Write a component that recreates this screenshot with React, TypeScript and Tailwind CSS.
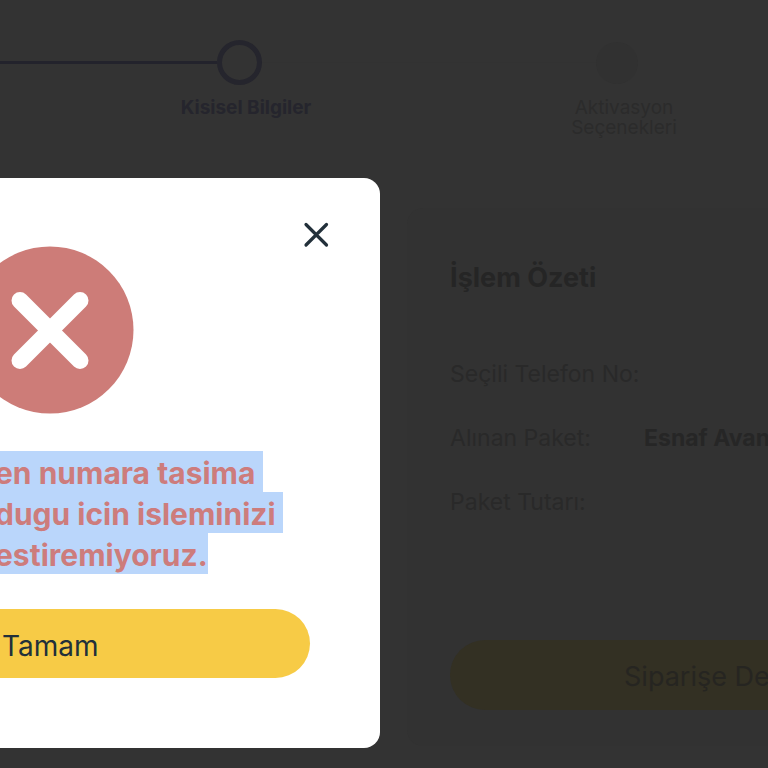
import React from "react";

const steps = [
  { label: "Kisisel Bilgiler", className: "font-bold text-[#25252d]" },
  { label: "Aktivasyon Seçenekleri", className: "text-[#2b2b2b]" },
];

const summaryRows = [
  { label: "Seçili Telefon No:", value: "" },
  { label: "Alınan Paket:", value: "Esnaf Avan" },
  { label: "Paket Tutarı:", value: "" },
];

const messageLines = ["en numara tasima ", "dugu icin isleminizi ", "estiremiyoruz."];

const Stepper = () => (
  <header className="pt-10">
    <div className="flex items-center" aria-hidden="true">
      <div className="h-[3px] w-[217px] bg-[#23232c]" />
      <div className="size-[45px] rounded-full border-[5px] border-[#25252d]" />
      <div className="h-px flex-1 bg-[#323232]" />
      <div className="mr-[130px] size-[42px] rounded-full bg-[#313131]" />
    </div>
    <ol className="ml-[57px] -mr-[45px] mt-[13px] grid grid-cols-2 text-center text-[19px] leading-5">
      {steps.map((step) => (
        <li key={step.label} className="flex justify-center">
          <span className={`max-w-[150px] ${step.className}`}>{step.label}</span>
        </li>
      ))}
    </ol>
  </header>
);

const Summary = () => (
  <section className="ml-auto mt-[70px] w-[47%] overflow-hidden rounded-l-2xl bg-[#323232] pb-9 pl-[43px] pt-[52px]">
    <h2 className="text-[27px] font-bold leading-9 text-[#252525]">İşlem Özeti</h2>
    <dl className="mt-[46px] grid grid-cols-[194px_1fr] text-[23px] leading-8">
      {summaryRows.map((row) => (
        <React.Fragment key={row.label}>
          <dt className="h-16 whitespace-nowrap pt-4 text-[#292929]">{row.label}</dt>
          <dd className="h-16 whitespace-nowrap pt-4 font-bold text-[#262626]">{row.value}</dd>
        </React.Fragment>
      ))}
    </dl>
    <button
      type="button"
      className="mt-[106px] h-[70px] w-full whitespace-nowrap rounded-l-full bg-[#333023] pl-[174px] pt-1 text-left text-[27px] text-[#262521]"
    >
      Siparişe De
    </button>
  </section>
);

const ErrorDialog = () => (
  <div
    role="dialog"
    aria-modal="true"
    aria-labelledby="dialog-message"
    className="absolute left-0 top-[178px] w-[380px] overflow-hidden rounded-r-2xl bg-white pb-[70px] pt-11"
  >
    <div className="flex justify-end pr-12">
      <button type="button" aria-label="Kapat" className="text-[#22303a]">
        <svg className="size-[30px]" viewBox="0 0 30 30" fill="none" stroke="currentColor" strokeWidth="3.2" strokeLinecap="round">
          <path d="M4 2.5 24.5 23M24.5 2.5 4 23" />
        </svg>
      </button>
    </div>
    <svg className="-ml-[34px] -mt-[6px] size-[168px]" viewBox="0 0 168 168" aria-hidden="true">
      <circle cx="84" cy="84" r="83.5" fill="#cd7c78" />
      <path d="M54 54.5 114 114.5M114 54.5 54 114.5" stroke="#fff" strokeWidth="17" strokeLinecap="round" />
    </svg>
    <p id="dialog-message" className="-ml-[5px] mt-[37px] text-3xl font-bold leading-[37px] text-[#cd7c7c]">
      {messageLines.map((line) => (
        <span key={line} className="flex">
          <span className="whitespace-pre bg-[#bad6fb] pt-1">{line}</span>
        </span>
      ))}
    </p>
    <button
      type="button"
      className="mt-[35px] block h-[69px] w-[310px] rounded-r-full bg-[#f7cb46] pl-[2px] pt-1 text-left text-[28px] text-[#22303a]"
    >
      Tamam
    </button>
  </div>
);

export default function App() {
  return (
    <div className="relative min-h-screen overflow-hidden bg-[#333333] font-['Inter','Liberation_Sans',sans-serif]">
      <Stepper />
      <Summary />
      <ErrorDialog />
    </div>
  );
}
